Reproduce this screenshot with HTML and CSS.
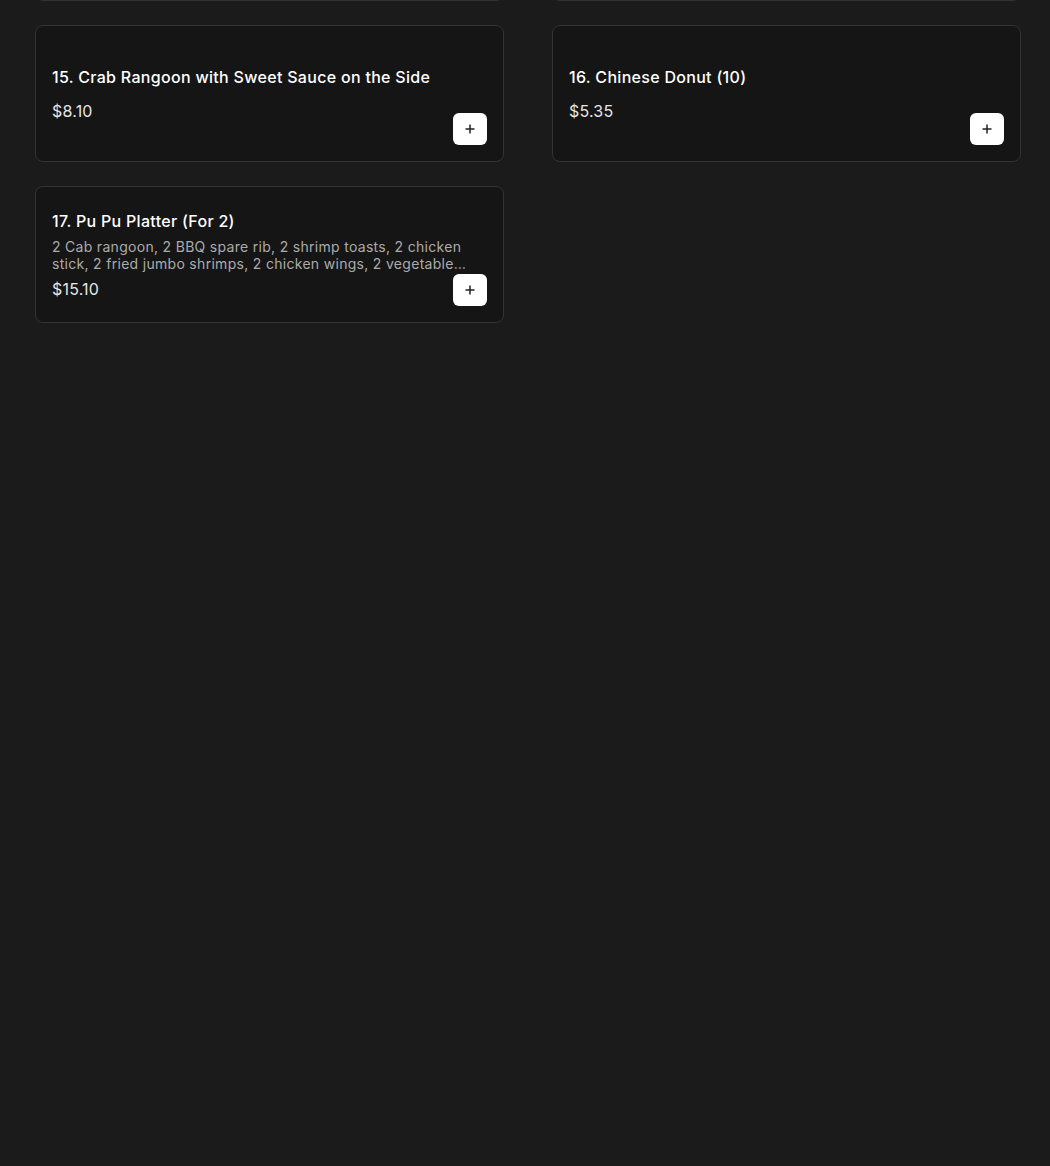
FILE: index.html
```html
<!DOCTYPE html>
<html lang="en">
<head>
    <meta charset="UTF-8">
    <meta name="viewport" content="width=device-width, initial-scale=1.0">
    <title>Menu - Appetizers</title>
    <link rel="stylesheet" href="styles.css">
</head>
<body>

    <!-- Menu grid (scrolled, previous row just above the fold) -->
    <div class="menu-grid">
        <div class="item-card">
            <div class="item-info">
                <div class="item-name">13. Egg Roll (1)</div>
                <div class="item-desc"></div>
                <div class="item-price">$2.10</div>
            </div>
        </div>
        <div class="item-card">
            <div class="item-info">
                <div class="item-name">14. Spring Roll (2)</div>
                <div class="item-desc"></div>
                <div class="item-price">$3.25</div>
            </div>
        </div>

        <div class="item-card">
            <div class="item-info">
                <div class="item-name">15. Crab Rangoon with Sweet Sauce on the Side</div>
                <div class="item-desc"></div>
                <div class="item-price">$8.10</div>
            </div>
            <button class="add-btn" aria-label="Add">
                <svg width="10" height="10" viewBox="0 0 10 10"><path d="M5 0.5v9M0.5 5h9" stroke="#222" stroke-width="1.5"/></svg>
            </button>
        </div>
        <div class="item-card">
            <div class="item-info">
                <div class="item-name">16. Chinese Donut (10)</div>
                <div class="item-desc"></div>
                <div class="item-price">$5.35</div>
            </div>
            <button class="add-btn" aria-label="Add">
                <svg width="10" height="10" viewBox="0 0 10 10"><path d="M5 0.5v9M0.5 5h9" stroke="#222" stroke-width="1.5"/></svg>
            </button>
        </div>

        <div class="item-card">
            <div class="item-info">
                <div class="item-name">17. Pu Pu Platter (For 2)</div>
                <div class="item-desc">2 Cab rangoon, 2 BBQ spare rib, 2 shrimp toasts, 2 chicken stick, 2 fried jumbo shrimps, 2 chicken wings, 2 vegetable egg rolls</div>
                <div class="item-price">$15.10</div>
            </div>
            <button class="add-btn" aria-label="Add">
                <svg width="10" height="10" viewBox="0 0 10 10"><path d="M5 0.5v9M0.5 5h9" stroke="#222" stroke-width="1.5"/></svg>
            </button>
        </div>
    </div>

</body>
</html>
```

FILE: styles.css
```css
/* Page */
body, html {
    margin: 0;
    height: 100%;
    overflow: hidden;
    background: #1b1b1b;
    font-family: 'Inter', 'Noto Sans', sans-serif;
    color: #fff;
}
/* Menu grid */
.menu-grid {
    display: grid;
    grid-template-columns: 469px 469px;
    column-gap: 48px;
    row-gap: 24px;
    margin: -136px 0 0 35px;
}
.item-card {
    position: relative;
    box-sizing: border-box;
    height: 137px;
    display: flex;
    align-items: center;
    padding: 16px;
    background: #151515;
    border: 1px solid #333;
    border-radius: 8px;
}
.item-info {
    flex: 1;
    min-width: 0;
    display: flex;
    flex-direction: column;
    gap: 6px;
    padding-right: 8px;
}
.item-name {
    font-size: 16px;
    font-weight: 500;
    line-height: 22px;
    letter-spacing: 0.3px;
}
.item-desc {
    font-size: 14px;
    line-height: 17px;
    letter-spacing: 0.3px;
    color: #ababab;
    display: -webkit-box;
    -webkit-line-clamp: 2;
    -webkit-box-orient: vertical;
    overflow: hidden;
}
.item-price {
    font-size: 16px;
    line-height: 22px;
    color: #e6e6e6;
    letter-spacing: 0.2px;
}
/* Add button, pinned to the card corner */
.add-btn {
    position: absolute;
    right: 16px;
    bottom: 16px;
    width: 34px;
    height: 32px;
    padding: 0;
    display: flex;
    align-items: center;
    justify-content: center;
    background: #fff;
    border: none;
    border-radius: 6px;
    cursor: pointer;
}
```
